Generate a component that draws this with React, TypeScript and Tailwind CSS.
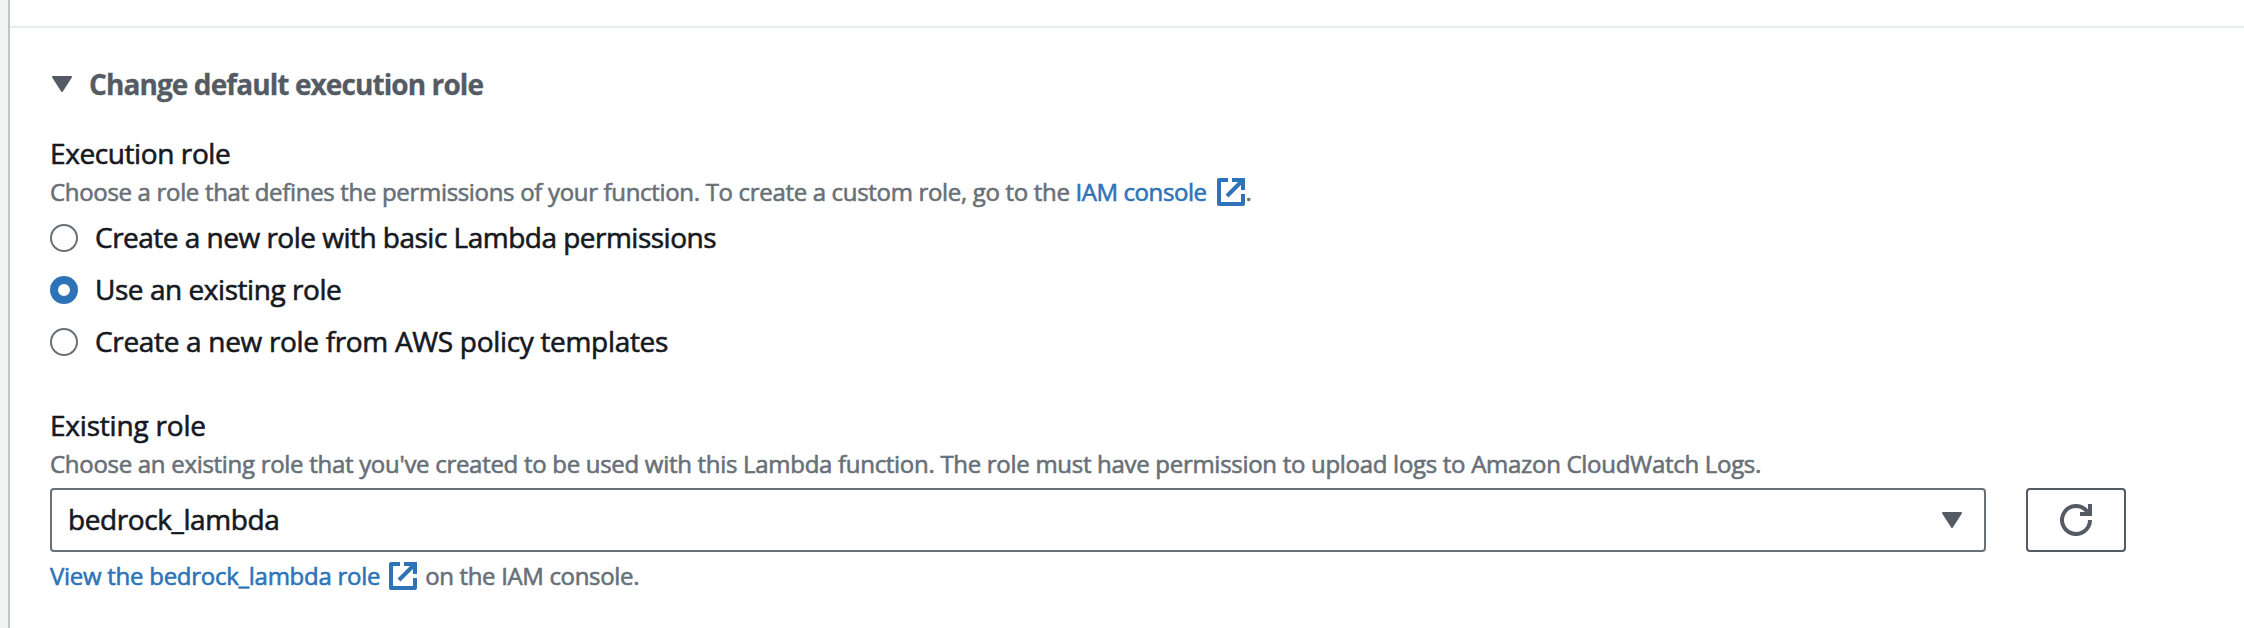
import type { ReactNode } from "react";

function ExternalIcon() {
  return (
    <svg viewBox="0 0 28 28" className="h-7 w-7 shrink-0" fill="none" stroke="#2e73b8" strokeWidth="4" strokeLinejoin="round">
      <path d="M11 2H2V26H26V16" />
      <path d="M15 2H26V12" strokeLinejoin="miter" />
      <path d="M25 3L10 18" />
    </svg>
  );
}

function Caret({ className }: { className: string }) {
  return (
    <svg viewBox="0 0 20 16" className={className} preserveAspectRatio="none" fill="#545b64" stroke="#545b64" strokeWidth="2" strokeLinejoin="round">
      <path d="M1 1H19L10 15Z" />
    </svg>
  );
}

function Radio({ checked, className, children }: { checked?: boolean; className: string; children: ReactNode }) {
  return (
    <label className="flex h-10 items-center gap-[17px] text-[28px] leading-10 text-[#16191f]">
      <span className={checked ? "mt-[2px] size-7 rounded-full border-8 border-[#2e73b8] bg-white" : "mt-[2px] size-7 rounded-full border-2 border-[#687078] bg-white"} />
      <span className={className}>{children}</span>
    </label>
  );
}

export default function App() {
  return (
    <div className="flex h-[628px] w-[2244px] overflow-hidden bg-[#f2f3f3] pl-2 font-['Open_Sans',sans-serif] whitespace-nowrap [-webkit-text-stroke:0.6px_currentColor]">
      <main className="flex grow flex-col border-l-2 border-[#bfc5c6] bg-white">
        <div className="h-7 shrink-0 border-b-2 border-[#eaeded]" />
        <section className="flex flex-col pt-[34px] pl-10">
          <button className="flex h-11 items-center gap-[17px] text-left text-[28px] leading-[44px] font-bold text-[#545b64] [-webkit-text-stroke:0.3px_currentColor]">
            <Caret className="ml-[2px] h-4 w-5" />
            <span className="tracking-[-0.91px]">Change default execution role</span>
          </button>

          <h3 className="mt-[27px] text-[28px] leading-10 tracking-[-0.4px] text-[#16191f]">Execution role</h3>
          <p className="mt-[3px] flex h-8 items-center text-2xl leading-8 text-[#687078]">
            <span className="tracking-[-0.322px]">Choose a role that defines the permissions of your function. To create a custom role, go to the</span>
            <a className="ml-[6px] flex items-center gap-[10px] text-[#2e73b8]">
              <span className="tracking-[-0.43px]">IAM console</span>
              <ExternalIcon />
            </a>
            <span className="ml-px">.</span>
          </p>

          <div className="mt-[9px] flex flex-col gap-3">
            <Radio className="tracking-[-0.51px]">Create a new role with basic Lambda permissions</Radio>
            <Radio checked className="tracking-[-0.453px]">Use an existing role</Radio>
            <Radio className="tracking-[-0.32px]">Create a new role from AWS policy templates</Radio>
          </div>

          <h3 className="mt-11 text-[28px] leading-10 tracking-[-0.2px] text-[#16191f]">Existing role</h3>
          <p className="mt-[3px] text-2xl leading-8 tracking-[-0.295px] text-[#687078]">
            Choose an existing role that you've created to be used with this Lambda function. The role must have permission to upload logs to Amazon CloudWatch Logs.
          </p>

          <div className="mt-2 flex h-16 gap-10">
            <div className="flex w-[1936px] items-center justify-between rounded-[4px] border-2 border-[#687078] pr-[22px] pl-4 text-[28px] text-[#16191f]">
              <span className="pb-[2px] tracking-[-0.41px]">bedrock_lambda</span>
              <Caret className="h-4 w-5" />
            </div>
            <button className="flex w-[100px] items-center justify-center rounded-[4px] border-2 border-[#545b64]">
              <svg viewBox="0 0 32 32" className="size-8" fill="none" stroke="#545b64" strokeWidth="4">
                <path d="M30 16A14 14 0 1 1 27.5 8" />
                <path d="M30 0V10H20" />
              </svg>
            </button>
          </div>

          <p className="mt-2 flex h-8 items-center text-2xl leading-8 text-[#687078]">
            <a className="flex items-center gap-[9px] text-[#2e73b8]">
              <span className="tracking-[-0.27px]">View the bedrock_lambda role</span>
              <ExternalIcon />
            </a>
            <span className="ml-2 tracking-[-0.341px]">on the IAM console.</span>
          </p>
        </section>
      </main>
    </div>
  );
}
